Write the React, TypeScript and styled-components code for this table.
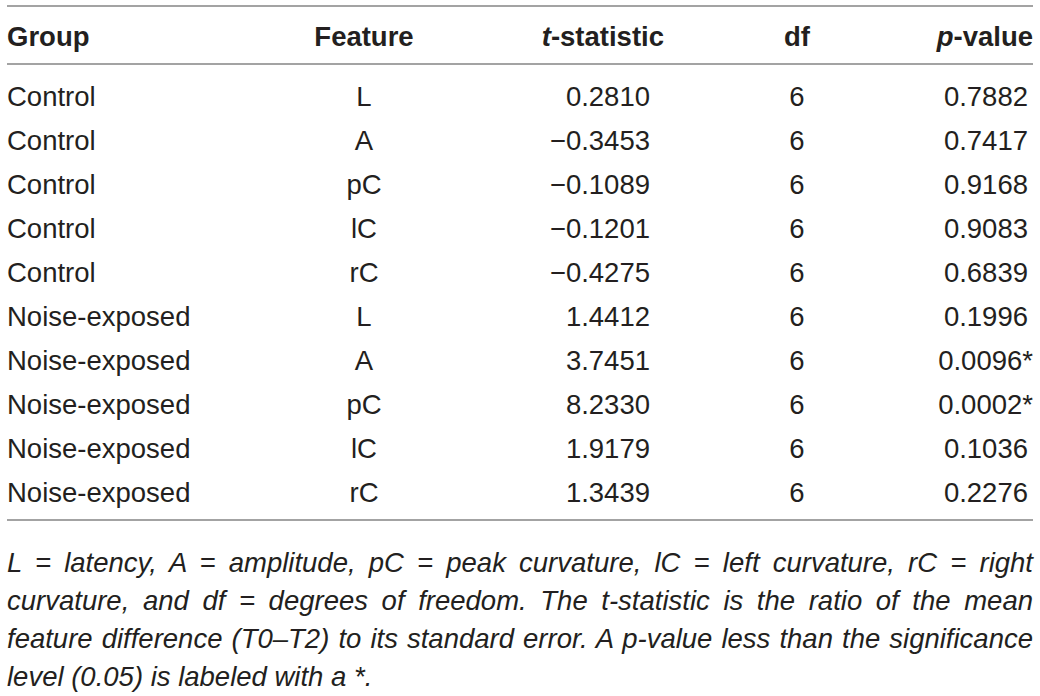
import React from "react"
import styled, { createGlobalStyle } from 'styled-components'

const GlobalStyle = createGlobalStyle`
body {
  margin: 0;
  background: white;
  font-family: "Liberation Sans", Arial, sans-serif;
  color: #231f20;
}
`

const Page = styled.div`
width: 1040px;
padding: 5px 7px 0 7px;
box-sizing: border-box;
`

const Table = styled.table`
width: 100%;
border-collapse: collapse;
table-layout: fixed;
font-size: 27.5px;
border-top: 2px solid #a3a3a3;
border-bottom: 2px solid #a3a3a3;
`

const HeadRow = styled.tr`
border-bottom: 2px solid #a3a3a3;
`

const HeadCell = styled.th<{ $align: string }>`
text-align: ${p => p.$align};
font-weight: bold;
height: 58px;
box-sizing: border-box;
padding: 4px 0 0 0;
vertical-align: middle;
`

const BodyRow = styled.tr`
&:first-child td {
  padding-top: 10px;
}
&:last-child td {
  padding-bottom: 4px;
}
`

const BodyCell = styled.td<{ $align: string; $padRight?: number }>`
text-align: ${p => p.$align};
padding: 0 ${p => p.$padRight || 0}px 0 0;
line-height: 44px;
vertical-align: middle;
white-space: nowrap;
`

const Caption = styled.div`
margin-top: 23px;
font-size: 27.5px;
font-style: italic;
line-height: 38px;
`

const CaptionLine = styled.div<{ $last?: boolean }>`
white-space: nowrap;
text-align: ${p => (p.$last ? 'left' : 'justify')};
text-align-last: ${p => (p.$last ? 'left' : 'justify')};
`

const rows = [
  ['Control', 'L', '0.2810', '0.7882'],
  ['Control', 'A', '\u22120.3453', '0.7417'],
  ['Control', 'pC', '\u22120.1089', '0.9168'],
  ['Control', 'lC', '\u22120.1201', '0.9083'],
  ['Control', 'rC', '\u22120.4275', '0.6839'],
  ['Noise-exposed', 'L', '1.4412', '0.1996'],
  ['Noise-exposed', 'A', '3.7451', '0.0096*'],
  ['Noise-exposed', 'pC', '8.2330', '0.0002*'],
  ['Noise-exposed', 'lC', '1.9179', '0.1036'],
  ['Noise-exposed', 'rC', '1.3439', '0.2276'],
]

const App = (): JSX.Element => (
  <Page>
    <GlobalStyle />
    <Table>
      <colgroup>
        <col style={{ width: 257 }} />
        <col style={{ width: 200 }} />
        <col style={{ width: 200 }} />
        <col style={{ width: 266 }} />
        <col style={{ width: 103 }} />
      </colgroup>
      <thead>
        <HeadRow>
          <HeadCell $align="left">Group</HeadCell>
          <HeadCell $align="center">Feature</HeadCell>
          <HeadCell $align="right"><i>t</i>-statistic</HeadCell>
          <HeadCell $align="center">df</HeadCell>
          <HeadCell $align="right"><i>p</i>-value</HeadCell>
        </HeadRow>
      </thead>
      <tbody>
        {rows.map((r, i) => (
          <BodyRow key={i}>
            <BodyCell $align="left">{r[0]}</BodyCell>
            <BodyCell $align="center">{r[1]}</BodyCell>
            <BodyCell $align="right" $padRight={14}>{r[2]}</BodyCell>
            <BodyCell $align="center">6</BodyCell>
            <BodyCell $align="right" $padRight={r[3].endsWith('*') ? 0 : 5}>{r[3]}</BodyCell>
          </BodyRow>
        ))}
      </tbody>
    </Table>
    <Caption>
      <CaptionLine>L = latency, A = amplitude, pC = peak curvature, lC = left curvature, rC = right</CaptionLine>
      <CaptionLine>curvature, and df = degrees of freedom. The t-statistic is the ratio of the mean</CaptionLine>
      <CaptionLine>feature difference (T0–T2) to its standard error. A p-value less than the significance</CaptionLine>
      <CaptionLine $last>level (0.05) is labeled with a *.</CaptionLine>
    </Caption>
  </Page>
)

export default App
